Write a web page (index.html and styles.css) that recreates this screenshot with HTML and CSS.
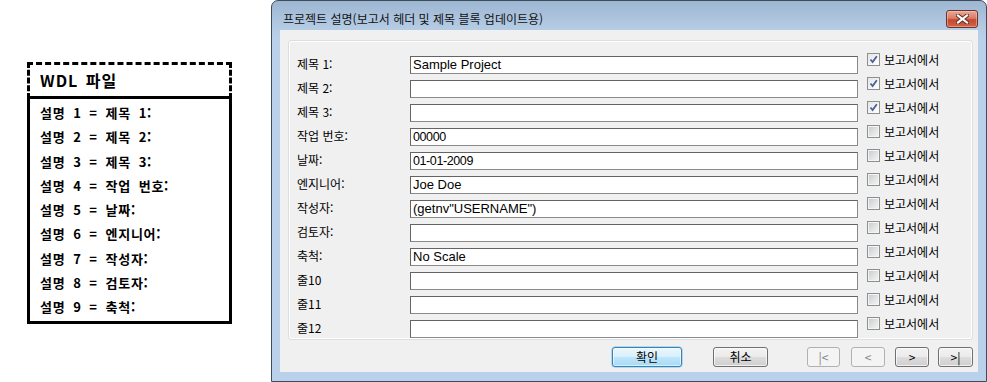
FILE: index.html
```html
<!DOCTYPE html>
<html lang="ko">
<head>
<meta charset="utf-8">
<title>프로젝트 설명</title>
<link rel="stylesheet" href="styles.css">
</head>
<body>
<div class="page">
  <div class="wdl">
    <div class="wdl-head">WDL 파일</div>
    <ul class="wdl-list">
      <li>설명 1 = 제목 1:</li>
      <li>설명 2 = 제목 2:</li>
      <li>설명 3 = 제목 3:</li>
      <li>설명 4 = 작업 번호:</li>
      <li>설명 5 = 날짜:</li>
      <li>설명 6 = 엔지니어:</li>
      <li>설명 7 = 작성자:</li>
      <li>설명 8 = 검토자:</li>
      <li>설명 9 = 축척:</li>
    </ul>
  </div>

  <div class="dialog">
    <div class="titlebar">
      <span class="title">프로젝트 설명(보고서 헤더 및 제목 블록 업데이트용)</span>
      <span class="close">
        <svg width="13" height="10" viewBox="0 0 13 10">
          <path d="M2 1.5 L11 8.5 M11 1.5 L2 8.5" stroke="#5a2a20" stroke-width="4" stroke-linecap="square" fill="none"/>
          <path d="M2 1.5 L11 8.5 M11 1.5 L2 8.5" stroke="#ffffff" stroke-width="2.2" stroke-linecap="square" fill="none"/>
        </svg>
      </span>
    </div>
    <div class="client">
      <div class="panel">
        <div class="row"><span class="lbl">제목 1:</span><span class="field">Sample Project</span><span class="chk"><span class="box on"><svg width="9" height="9" viewBox="0 0 9 9"><path d="M1.5 4.5 L3.6 7 L7.8 1.2" stroke="#4a5f94" stroke-width="1.8" fill="none"/></svg></span>보고서에서</span></div>
        <div class="row"><span class="lbl">제목 2:</span><span class="field"></span><span class="chk"><span class="box on"><svg width="9" height="9" viewBox="0 0 9 9"><path d="M1.5 4.5 L3.6 7 L7.8 1.2" stroke="#4a5f94" stroke-width="1.8" fill="none"/></svg></span>보고서에서</span></div>
        <div class="row"><span class="lbl">제목 3:</span><span class="field"></span><span class="chk"><span class="box on"><svg width="9" height="9" viewBox="0 0 9 9"><path d="M1.5 4.5 L3.6 7 L7.8 1.2" stroke="#4a5f94" stroke-width="1.8" fill="none"/></svg></span>보고서에서</span></div>
        <div class="row"><span class="lbl">작업 번호:</span><span class="field num">00000</span><span class="chk"><span class="box"></span>보고서에서</span></div>
        <div class="row"><span class="lbl">날짜:</span><span class="field num">01-01-2009</span><span class="chk"><span class="box"></span>보고서에서</span></div>
        <div class="row"><span class="lbl">엔지니어:</span><span class="field">Joe Doe</span><span class="chk"><span class="box"></span>보고서에서</span></div>
        <div class="row"><span class="lbl">작성자:</span><span class="field">(getnv"USERNAME")</span><span class="chk"><span class="box"></span>보고서에서</span></div>
        <div class="row"><span class="lbl">검토자:</span><span class="field"></span><span class="chk"><span class="box"></span>보고서에서</span></div>
        <div class="row"><span class="lbl">축척:</span><span class="field">No Scale</span><span class="chk"><span class="box"></span>보고서에서</span></div>
        <div class="row"><span class="lbl">줄10</span><span class="field"></span><span class="chk"><span class="box"></span>보고서에서</span></div>
        <div class="row"><span class="lbl">줄11</span><span class="field"></span><span class="chk"><span class="box"></span>보고서에서</span></div>
        <div class="row"><span class="lbl">줄12</span><span class="field"></span><span class="chk"><span class="box"></span>보고서에서</span></div>
      </div>
      <div class="buttons">
        <span class="btn default w-ok">확인</span>
        <span class="btn w-cancel">취소</span>
        <span class="btn disabled w-first">|&lt;</span>
        <span class="btn disabled w-prev">&lt;</span>
        <span class="btn w-next">&gt;</span>
        <span class="btn w-last">&gt;|</span>
      </div>
    </div>
  </div>
</div>
</body>
</html>
```

FILE: styles.css
```css
* { box-sizing: border-box; }

html, body {
  margin: 0;
  padding: 0;
  background: #ffffff;
}

body {
  width: 987px;
  height: 382px;
  overflow: hidden;
  font-family: "Noto Sans CJK KR", "Liberation Sans", sans-serif;
  color: #000;
}

.page {
  display: flex;
  align-items: flex-start;
  padding-left: 27px;
}

/* ---------- WDL box ---------- */
.wdl {
  width: 205px;
  margin-top: 62px;
}

.wdl-head {
  height: 37px;
  border: 3px dashed #000;
  border-bottom: 3px solid #000;
  padding-left: 10px;
  font-weight: 700;
  font-size: 16px;
  line-height: 31px;
  letter-spacing: 1px;
  word-spacing: 2px;
}

.wdl-list {
  list-style: none;
  margin: 0;
  padding: 2px 0 2px 10px;
  height: 225px;
  border: 3px solid #000;
  border-top: none;
}

.wdl-list li {
  font-weight: 700;
  font-size: 13px;
  line-height: 24.25px;
  height: 24.25px;
  white-space: nowrap;
  letter-spacing: 0.7px;
  word-spacing: 3.5px;
}

/* ---------- Dialog ---------- */
.dialog {
  width: 716px;
  height: 382px;
  margin-left: 39px;
  border: 1px solid #3e4c58;
  border-radius: 7px 7px 0 0;
  background: linear-gradient(to bottom, #9db6d1 0px, #b5cce5 28px, #b9d1ea 40px, #b9d1ea 100%);
  display: flex;
  flex-direction: column;
}

.titlebar {
  height: 29px;
  padding: 6px 8px 0 11px;
  display: flex;
  align-items: center;
  justify-content: space-between;
}

.title {
  font-size: 12px;
  line-height: 14px;
  color: #111;
  white-space: nowrap;
}

.close {
  width: 32px;
  height: 18px;
  border: 1px solid #6b3328;
  border-radius: 3px;
  background: linear-gradient(to bottom, #e9a898 0%, #d97d66 45%, #c7472c 55%, #d0644a 100%);
  box-shadow: inset 0 0 0 1px rgba(255, 210, 200, 0.45);
  display: flex;
  align-items: center;
  justify-content: center;
}

.close svg { display: block; }

.client {
  flex: 1;
  margin: 0 8px 9px 8px;
  background: #f0f0f0;
  padding: 10px 5px 0 8px;
  display: flex;
  flex-direction: column;
}

.panel {
  height: 300px;
  border: 1px solid #dcdfe2;
  border-radius: 3px;
  box-shadow: inset 0 0 0 1px #ffffff;
  padding: 15px 0 0 8px;
}

.row {
  display: flex;
  align-items: flex-start;
  height: 18px;
  margin-bottom: 6px;
}

.row:last-child { margin-bottom: 0; }

.lbl {
  width: 113px;
  font-size: 12px;
  line-height: 16px;
  white-space: nowrap;
}

.field {
  width: 448px;
  height: 18px;
  border: 1px solid #646464;
  border-right-color: #8a8a8a;
  border-bottom-color: #8a8a8a;
  background: #fff;
  font-family: "Liberation Sans", "Noto Sans CJK KR", sans-serif;
  font-size: 13px;
  line-height: 16px;
  padding-left: 2px;
  white-space: nowrap;
}

.field.num {
  letter-spacing: -0.4px;
  font-size: 12.5px;
}

.chk {
  display: flex;
  align-items: center;
  margin-left: 9px;
  margin-top: -3px;
  height: 13px;
  font-size: 12px;
  line-height: 13px;
  white-space: nowrap;
}

.box {
  width: 13px;
  height: 13px;
  border: 1px solid #8e8f8f;
  background: #f4f4f4;
  margin-right: 4px;
  padding: 1px;
  display: flex;
}

.box::before {
  content: "";
  flex: 1;
  background: linear-gradient(135deg, #c9ccd1 0%, #dfe1e3 50%, #f2f2f2 100%);
}

.box.on::before { display: none; }

.box.on {
  background: linear-gradient(135deg, #e2e5e9 0%, #f5f5f5 60%, #ffffff 100%);
  align-items: center;
  justify-content: center;
}

.box.on svg { display: block; }

/* ---------- Buttons ---------- */
.buttons {
  display: flex;
  justify-content: flex-end;
  margin-top: 7px;
}

.btn {
  height: 20px;
  border: 1px solid #707070;
  border-radius: 3px;
  background: linear-gradient(to bottom, #f2f2f2 0%, #ebebeb 50%, #dddddd 51%, #cfcfcf 100%);
  box-shadow: inset 0 0 0 1px rgba(255, 255, 255, 0.7);
  font-size: 12px;
  line-height: 18px;
  text-align: center;
  white-space: nowrap;
  color: #000;
}

.btn.default {
  border-color: #3c7fb1;
  background: linear-gradient(to bottom, #eaf6fd 0%, #d9f0fc 50%, #bee6fd 51%, #a7d9f5 100%);
  box-shadow: inset 0 0 0 1px rgba(255, 255, 255, 0.6), 0 0 0 0.5px #6bc6f0;
}

.btn.disabled {
  border-color: #adb2b5;
  background: #f4f4f4;
  color: #838383;
  box-shadow: none;
}

.w-ok { width: 70px; }
.w-cancel { width: 55px; margin-left: 31px; }
.w-first { width: 33px; margin-left: 39px; }
.w-prev { width: 34px; margin-left: 11px; }
.w-next { width: 34px; margin-left: 10px; }
.w-last { width: 35px; margin-left: 9px; }
```
